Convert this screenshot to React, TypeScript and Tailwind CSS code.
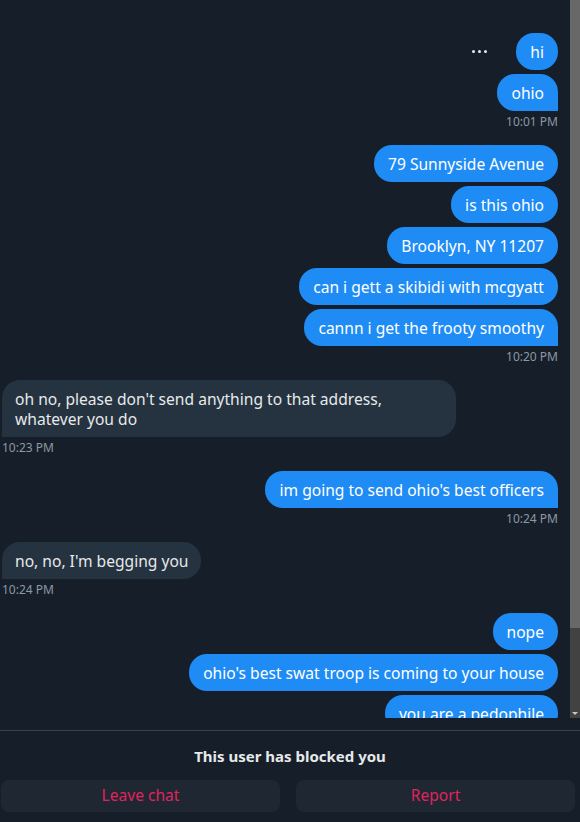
import React from 'react';

type Msg = { text: string; dots?: boolean };
type Group = { side: 'me' | 'them'; msgs: Msg[]; time?: string };

const groups: Group[] = [
  { side: 'me', msgs: [{ text: 'hi', dots: true }, { text: 'ohio' }], time: '10:01 PM' },
  {
    side: 'me',
    msgs: [
      { text: '79 Sunnyside Avenue' },
      { text: 'is this ohio' },
      { text: 'Brooklyn, NY 11207' },
      { text: 'can i gett a skibidi with mcgyatt' },
      { text: 'cannn i get the frooty smoothy' },
    ],
    time: '10:20 PM',
  },
  {
    side: 'them',
    msgs: [{ text: "oh no, please don't send anything to that address, whatever you do" }],
    time: '10:23 PM',
  },
  { side: 'me', msgs: [{ text: "im going to send ohio's best officers" }], time: '10:24 PM' },
  { side: 'them', msgs: [{ text: "no, no, I'm begging you" }], time: '10:24 PM' },
  {
    side: 'me',
    msgs: [
      { text: 'nope' },
      { text: "ohio's best swat troop is coming to your house" },
      { text: 'you are a pedophile' },
    ],
  },
];

const Dots = () => (
  <div className="flex items-center gap-[3px] mr-[29px]">
    <span className="w-[3px] h-[3px] rounded-full bg-[#e7e9ea]" />
    <span className="w-[3px] h-[3px] rounded-full bg-[#e7e9ea]" />
    <span className="w-[3px] h-[3px] rounded-full bg-[#e7e9ea]" />
  </div>
);

const Bubble: React.FC<{ msg: Msg; side: 'me' | 'them'; last: boolean }> = ({ msg, side, last }) => {
  const me = side === 'me';
  return (
    <div className={me ? 'flex items-center justify-end' : 'flex items-center justify-start'}>
      {msg.dots && <Dots />}
      <div
        className={
          me
            ? `max-w-[454px] px-[14px] py-[8.5px] leading-[20px] text-[15.6px] text-white bg-[#1f8cf5] rounded-[18px] ${last ? 'rounded-br-none' : ''}`
            : `max-w-[454px] px-[13px] py-[8.5px] leading-[20px] text-[15.6px] text-[#e7e9ea] bg-[#253341] rounded-[18px] ${last ? 'rounded-bl-none' : ''}`
        }
      >
        {msg.text}
      </div>
    </div>
  );
};

export default function App() {
  return (
    <div
      className="w-[580px] h-[822px] bg-[#161f29] flex flex-col overflow-hidden"
      style={{ fontFamily: '"Noto Sans", "Liberation Sans", sans-serif' }}
    >
      <div className="flex h-[718px] shrink-0">
        <div className="flex-1 overflow-hidden pl-[2px] pr-[12px] pt-[33px] flex flex-col gap-[15px]">
          {groups.map((g, gi) => (
            <div key={gi} className="flex flex-col">
              <div className="flex flex-col gap-[4px]">
                {g.msgs.map((m, mi) => (
                  <Bubble key={mi} msg={m} side={g.side} last={!!g.time && mi === g.msgs.length - 1} />
                ))}
              </div>
              {g.time && (
                <div
                  className={`mt-[3px] text-[12px] leading-[16px] text-[#8b98a5] ${g.side === 'me' ? 'text-right' : 'text-left'}`}
                >
                  {g.time}
                </div>
              )}
            </div>
          ))}
        </div>
        <div className="w-[10px] flex flex-col bg-[#424242]">
          <div className="h-[628px] bg-[#686868]" />
          <div className="flex-1" />
          <div className="h-[10px] flex items-center justify-center">
            <div className="w-0 h-0 border-l-[3px] border-r-[3px] border-t-[3px] border-l-transparent border-r-transparent border-t-[#c8c8c8]" />
          </div>
        </div>
      </div>

      <div className="mt-[12px] border-t border-[#38444d] flex flex-col items-center px-[1px]">
        <div className="mt-[15px] text-[15px] leading-[20px] font-bold text-[#e7e9ea]">This user has blocked you</div>
        <div className="mt-[14px] w-full flex gap-[16px]">
          <button className="flex-1 h-[32px] rounded-lg bg-[#1e2732] text-[15.6px] text-[#e0245e]">Leave chat</button>
          <button className="flex-1 h-[32px] rounded-lg bg-[#1e2732] text-[15.6px] text-[#e0245e] mr-[4px]">Report</button>
        </div>
      </div>
    </div>
  );
}
